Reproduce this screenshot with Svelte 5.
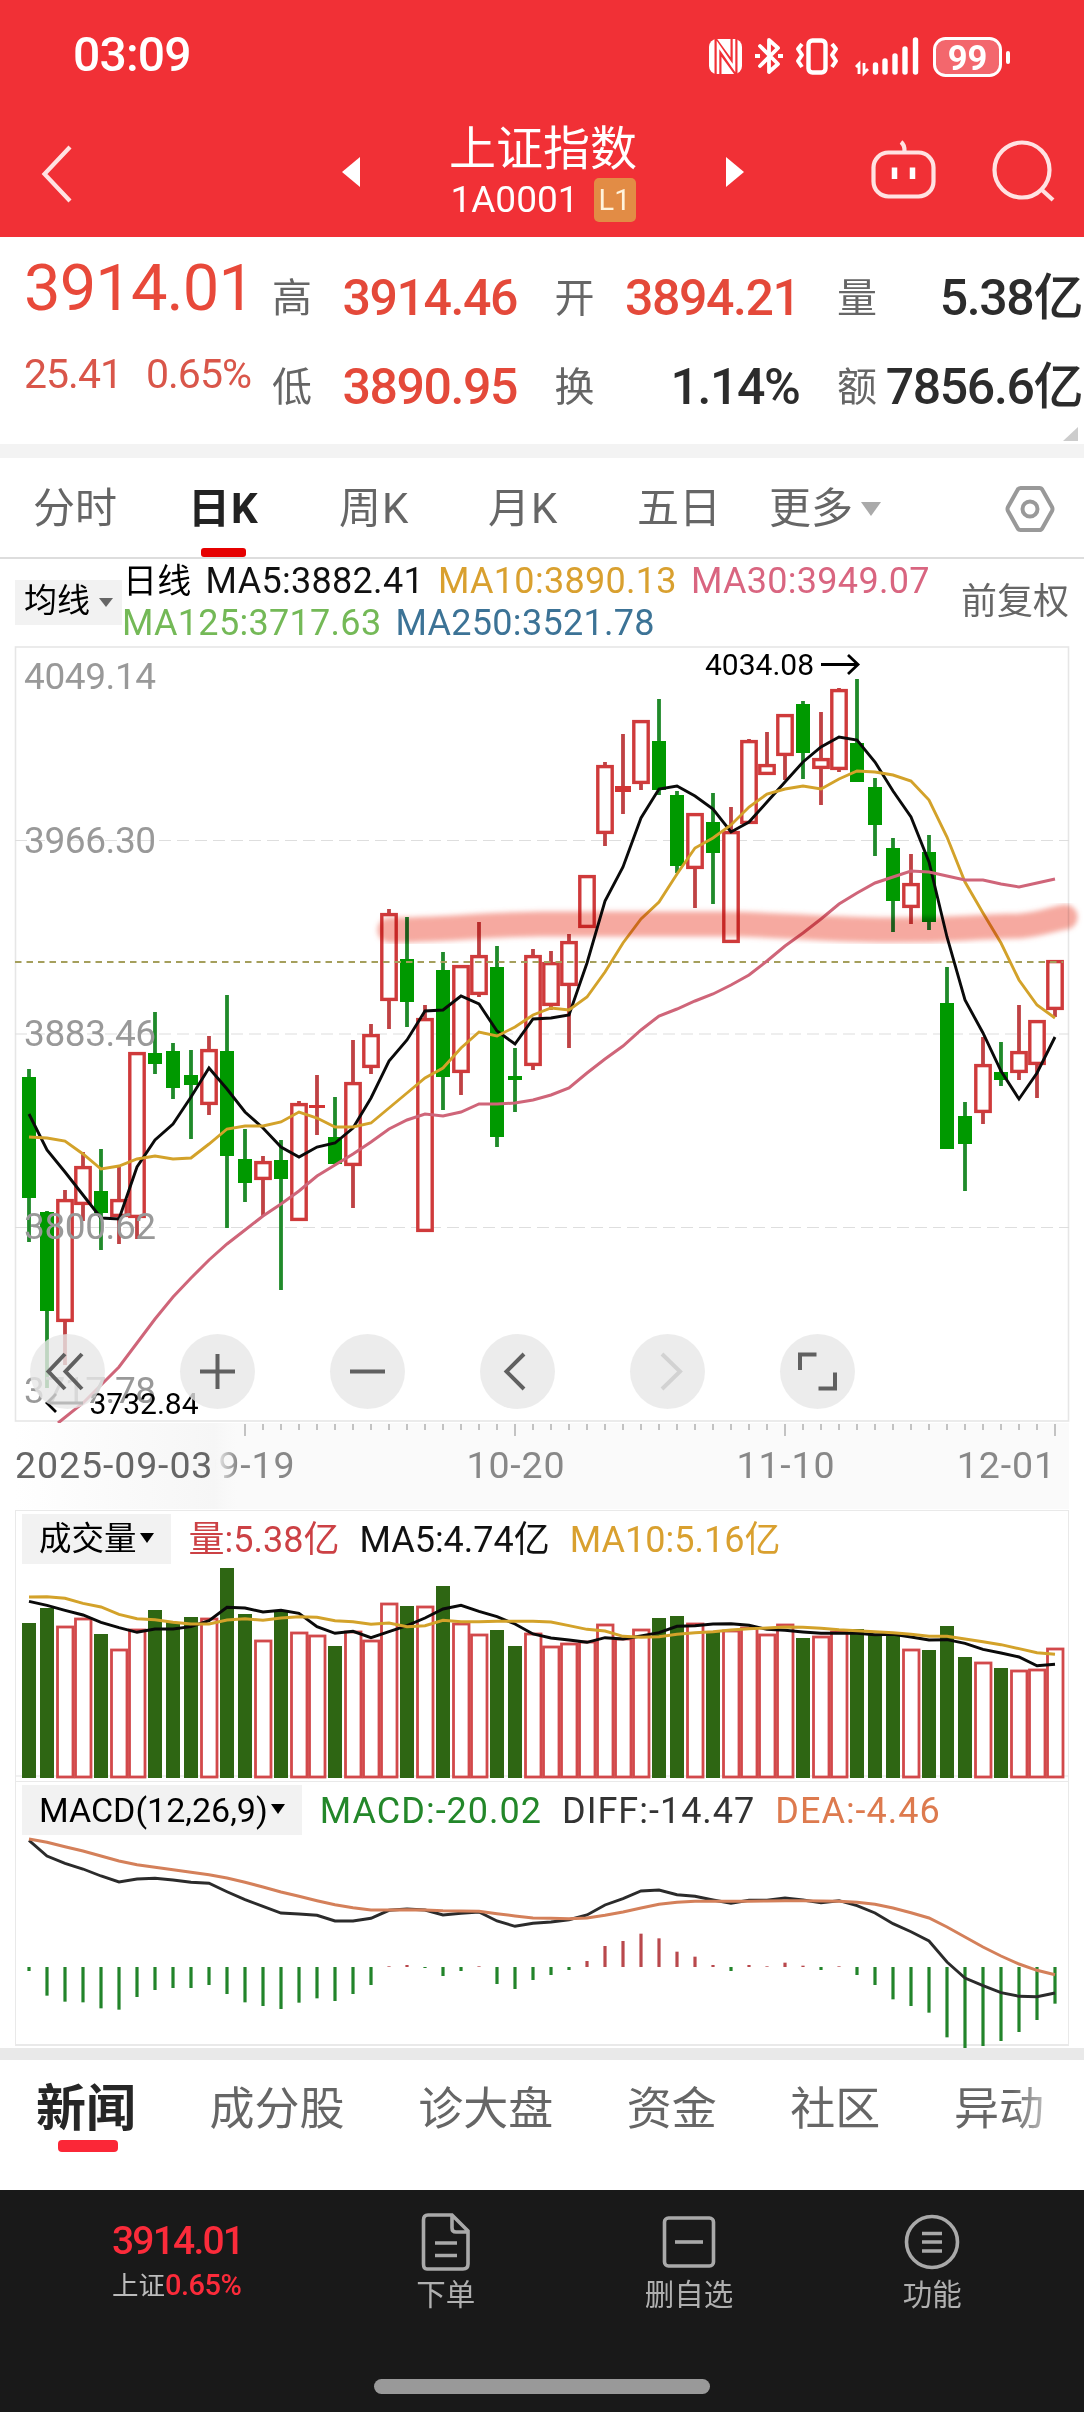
<script lang="ts">
  type Candle = [kind: string, high: number, top: number, bottom: number, low: number];

  const candles: Candle[] = [
    ["g", 1069, 1077, 1198, 1242], ["g", 1211, 1212, 1311, 1388], ["r", 1190, 1199, 1322, 1365],
    ["r", 1152, 1166, 1205, 1221], ["g", 1149, 1191, 1213, 1250], ["r", 1167, 1199, 1217, 1244],
    ["r", 1052, 1052, 1218, 1239], ["g", 1012, 1053, 1064, 1074], ["g", 1043, 1051, 1088, 1099],
    ["g", 1050, 1075, 1085, 1139], ["r", 1036, 1049, 1105, 1115], ["g", 995, 1051, 1156, 1228],
    ["g", 1129, 1159, 1183, 1202], ["r", 1156, 1161, 1180, 1216], ["g", 1140, 1160, 1179, 1290],
    ["r", 1101, 1103, 1221, 1221], ["r", 1075, 1105, 1108, 1135], ["g", 1097, 1137, 1164, 1164],
    ["r", 1040, 1082, 1166, 1208], ["r", 1024, 1034, 1068, 1074], ["r", 909, 913, 1001, 1029],
    ["g", 917, 959, 1002, 1027], ["r", 1005, 1018, 1232, 1232], ["g", 952, 970, 1077, 1110],
    ["r", 965, 965, 1073, 1095], ["r", 922, 955, 995, 997], ["g", 946, 967, 1137, 1147],
    ["g", 1048, 1076, 1080, 1112], ["r", 949, 955, 1066, 1070], ["r", 951, 962, 1006, 1010],
    ["r", 934, 941, 986, 1048], ["r", 875, 875, 928, 928], ["r", 762, 765, 834, 846],
    ["r", 734, 786, 792, 814], ["r", 720, 720, 784, 790], ["g", 699, 741, 790, 795],
    ["g", 791, 795, 866, 873], ["r", 813, 813, 869, 908], ["g", 793, 822, 853, 904],
    ["r", 807, 831, 943, 943], ["r", 739, 740, 824, 824], ["r", 732, 764, 775, 775],
    ["r", 714, 714, 756, 780], ["g", 701, 704, 753, 779], ["r", 712, 758, 769, 805],
    ["r", 688, 689, 770, 772], ["g", 679, 743, 782, 782], ["g", 778, 787, 825, 856],
    ["g", 838, 848, 901, 932], ["r", 854, 883, 908, 924], ["g", 835, 852, 922, 930],
    ["g", 967, 1003, 1149, 1149], ["g", 1102, 1116, 1144, 1191], ["r", 1037, 1064, 1113, 1124],
    ["g", 1042, 1072, 1080, 1086], ["r", 1005, 1051, 1073, 1080], ["r", 1020, 1020, 1065, 1098],
    ["r", 960, 960, 1010, 1017],
  ];

  const ma5 = [
    1114, 1150, 1172, 1195, 1218, 1219, 1167, 1140, 1124, 1097, 1068, 1089, 1112, 1128, 1147, 1157,
    1147, 1143, 1128, 1098, 1061, 1040, 1011, 1010, 996, 1004, 1031, 1044, 1019, 1018, 1015, 963,
    901, 867, 818, 789, 786, 796, 809, 832, 822, 802, 782, 762, 747, 737, 740, 762, 791, 817, 862,
    937, 1000, 1033, 1071, 1099, 1073, 1037,
  ];
  const ma10 = [
    1137, 1138, 1141, 1154, 1169, 1166, 1159, 1156, 1159, 1158, 1144, 1129, 1126, 1126, 1122, 1112,
    1118, 1127, 1127, 1123, 1108, 1093, 1078, 1068, 1048, 1032, 1036, 1027, 1015, 1008, 1010, 997,
    972, 943, 919, 902, 874, 848, 838, 825, 807, 794, 789, 786, 789, 779, 771, 772, 775, 781, 800,
    837, 882, 913, 943, 980, 1005, 1018,
  ];
  // starts two sessions in: earlier points fall below the panel
  const ma30 = [
    1403, 1385, 1367, 1343, 1319, 1297, 1278, 1260, 1244, 1230, 1216, 1204, 1191, 1176, 1165, 1154,
    1142, 1129, 1120, 1114, 1116, 1112, 1104, 1104, 1103, 1100, 1095, 1088, 1073, 1059, 1046, 1030,
    1016, 1009, 1001, 994, 985, 975, 961, 946, 933, 919, 904, 893, 883, 877, 871, 872, 876, 880,
    880, 884, 887, 883, 879,
  ];

  const volumes = [
    1623, 1608, 1626, 1618, 1634, 1649, 1629, 1610, 1622, 1617, 1618, 1568, 1614, 1640, 1612, 1632,
    1635, 1646, 1631, 1640, 1603, 1606, 1606, 1586, 1623, 1634, 1630, 1646, 1633, 1646, 1643, 1641,
    1624, 1638, 1629, 1618, 1616, 1623, 1632, 1630, 1627, 1634, 1624, 1638, 1636, 1631, 1629, 1635,
    1634, 1649, 1650, 1626, 1657, 1662, 1668, 1670, 1669, 1648,
  ];
  const volMa5 = [
    304, 316, 331, 345, 367, 383, 397, 387, 387, 380, 362, 322, 324, 336, 331, 340, 380, 400, 394,
    413, 395, 377, 354, 327, 316, 334, 350, 372, 402, 414, 420, 427, 413, 417, 408, 398, 379, 377,
    372, 371, 376, 388, 391, 396, 400, 400, 400, 404, 403, 411, 420, 419, 430, 448, 459, 471, 497,
    493,
  ].map((v) => 1500 + v / 3);
  const volMa10 = [
    291, 290, 295, 310, 321, 343, 356, 359, 367, 372, 372, 360, 356, 361, 354, 350, 352, 362, 365,
    373, 369, 380, 377, 361, 365, 365, 364, 364, 364, 366, 377, 388, 393, 409, 412, 410, 403, 398,
    395, 390, 386, 384, 381, 382, 385, 389, 392, 395, 398, 403, 409, 409, 417, 425, 434, 446, 458,
    463,
  ].map((v) => 1500 + v / 3);

  const diff = [
    178, 225, 247, 264, 285, 303, 294, 292, 297, 304, 307, 332, 356, 376, 396, 399, 403, 420, 420,
    412, 388, 384, 387, 402, 397, 393, 420, 436, 427, 423, 416, 402, 372, 353, 330, 327, 341, 346,
    357, 367, 358, 358, 351, 357, 365, 359, 374, 396, 428, 452, 480, 543, 591, 614, 635, 646, 647,
    636,
  ].map((v) => 1780 + v / 3);
  const dea = [
    174, 184, 197, 210, 225, 240, 251, 259, 266, 274, 281, 291, 304, 318, 333, 346, 359, 371, 380,
    387, 387, 386, 387, 389, 390, 391, 398, 405, 411, 412, 413, 411, 403, 393, 381, 370, 364, 361,
    361, 361, 361, 360, 359, 359, 360, 361, 364, 370, 381, 395, 411, 438, 468, 498, 525, 549, 568,
    581,
  ].map((v) => 1780 + v / 3);
  const macd = [
    570, 644, 662, 664, 682, 686, 648, 627, 621, 621, 612, 639, 664, 675, 684, 665, 652, 660, 639,
    612, 556, 552, 561, 585, 570, 556, 609, 624, 597, 582, 567, 540, 495, 480, 458, 472, 512, 527,
    552, 570, 552, 556, 545, 554, 567, 556, 582, 612, 655, 675, 695, 769, 804, 795, 780, 753, 717,
    668,
  ].map((v) => 1780 + v / 3);
  const zero = 1966;

  const x = (i: number) => 29 + i * 18;
  const line = (ys: number[], from = 0) =>
    ys.map((y, i) => `${x(i + from)},${y.toFixed(1)}`).join(" ");

  const gridLines = [840.5, 1034, 1227.5];
  const axisLabels: [string, number][] = [
    ["4049.14", 689], ["3966.30", 853], ["3883.46", 1046], ["3800.62", 1239], ["3717.78", 1403],
  ];
  const ticks = Array.from({ length: 46 }, (_, i) => i + 12);

  const quotes = [
    { label: "高", value: "3914.46", up: true },
    { label: "开", value: "3894.21", up: true },
    { label: "量", value: "5.38亿", up: false },
    { label: "低", value: "3890.95", up: true },
    { label: "换", value: "1.14%", up: false },
    { label: "额", value: "7856.6亿", up: false },
  ];
  const periods = ["分时", "日K", "周K", "月K", "五日"];
  const sections = ["新闻", "成分股", "诊大盘", "资金", "社区", "异动"];
</script>

<div class="screen">
  <header class="top">
    <div class="status">
      <span class="clock">03:09</span>
      <svg class="status-icons" viewBox="705 30 310 54" width="310" height="54">
        <rect x="709" y="39" width="33" height="35" rx="8" fill="#fff" />
        <path d="M718 74V46L734 68V39" fill="none" stroke="#f13036" stroke-width="7" />
        <path d="M718 74V45L734 68V39" fill="none" stroke="#fff" stroke-width="2.6" />
        <path d="M760 46L778 64L769 72V40L778 48L760 66" fill="none" stroke="#fff" stroke-width="3.8" stroke-linejoin="round" stroke-linecap="round" />
        <path d="M755 56h5M778 56h5" stroke="#fff" stroke-width="4" />
        <rect x="808.500" y="40.500" width="17" height="32" rx="4" fill="none" stroke="#fff" stroke-width="4.400" />
        <path d="M802 44l-4 5 4 6-4 6 4 6M832 44l4 5-4 6 4 6-4 6" fill="none" stroke="#fff" stroke-width="4" stroke-linejoin="round" />
        <path d="M859 74V64l-3 3M864 63v10l4-4" fill="none" stroke="#fff" stroke-width="2.800" />
        <path d="M875.500 65v7M885 61v11M895 56v16M905 49v23M915.500 40v32" stroke="#fff" stroke-width="5.400" stroke-linecap="round" />
        <rect x="934.500" y="38.500" width="66" height="37" rx="11" fill="#f3676d" stroke="#fff" stroke-width="3" />
        <path d="M1008 53v9" stroke="#fff" stroke-width="4" stroke-linecap="round" />
        <text x="967.500" y="69.500" text-anchor="middle" font-size="34.500" font-weight="700" fill="#fff">99</text>
      </svg>
    </div>
    <nav class="titlebar">
      <svg class="back" viewBox="0 0 30 58" width="30" height="58">
        <path d="M28 2L2.500 29L28 56" fill="none" stroke="#ffe2e2" stroke-width="4.200" />
      </svg>
      <div class="switcher">
        <span class="prev"></span>
        <div class="name">
          <h1>上证指数</h1>
          <div class="code">1A0001<span class="level">L1</span></div>
        </div>
        <span class="next"></span>
      </div>
      <div class="actions">
        <svg viewBox="870 137 67 62" width="67" height="62" fill="none" stroke="#ffe2e2" stroke-width="4.200">
          <rect x="873.500" y="150.500" width="60" height="44" rx="15" />
          <path d="M901 140q4 3 3.500 10" />
          <path d="M894.500 165.500v11.500M912.500 165.500v11.500" stroke="#fff" stroke-width="5.500" />
        </svg>
        <svg viewBox="992 139 63 63" width="63" height="63" fill="none" stroke="#ffe2e2" stroke-width="4.200">
          <circle cx="1022" cy="170" r="27.500" />
          <path d="M1042 190L1053 200" />
        </svg>
      </div>
    </nav>
  </header>

  <section class="quote">
    <div class="last">
      <strong>3914.01</strong>
      <div class="change"><span>25.41</span><span>0.65%</span></div>
    </div>
    <dl>
      {#each quotes as q}
        <div class="stat">
          <dt>{q.label}</dt>
          <dd class:up={q.up}>{q.value}</dd>
        </div>
      {/each}
    </dl>
    <span class="corner"></span>
  </section>

  <div class="periods">
    {#each periods as p}
      <span class="period" class:kline={p.endsWith("K")} class:on={p === "日K"}>{p}</span>
    {/each}
    <span class="period more">更多<i></i></span>
    <svg class="gear" viewBox="0 0 50 48" width="50" height="48" fill="none" stroke="#999" stroke-width="4">
      <path d="M15.500 3H34.500Q36.500 3 37.500 5L47 22Q48 24 47 26L37.500 43Q36.500 45 34.500 45H15.500Q13.500 45 12.500 43L3 26Q2 24 3 22L12.500 5Q13.500 3 15.500 3Z" />
      <circle cx="25" cy="24" r="7.500" />
    </svg>
  </div>

  <div class="averages">
    <span class="pick">均线<i></i></span>
    <div class="legend">
      <div><b>日线</b><span class="k">MA5:3882.41</span><span class="y">MA10:3890.13</span><span class="p">MA30:3949.07</span></div>
      <div><span class="g">MA125:3717.63</span><span class="b">MA250:3521.78</span></div>
    </div>
    <span class="adjust">前复权</span>
  </div>

  <div class="price">
    <svg viewBox="0 646 1084 864" width="1084" height="864">
      <defs>
        <linearGradient id="fade">
          <stop offset="0" stop-color="#fff" />
          <stop offset="0.900" stop-color="#f6f6f6" />
          <stop offset="1" stop-color="#f8f8f8" stop-opacity="0" />
        </linearGradient>
        <filter id="soft" x="-5%" y="-100%" width="110%" height="300%">
          <feGaussianBlur stdDeviation="2.500" />
        </filter>
      </defs>

      <rect x="15" y="1423" width="1054" height="86" fill="#fafafa" />
      <rect x="15.500" y="647" width="1053" height="774" fill="none" stroke="#e6e6e6" stroke-width="1.600" />
      {#each gridLines as y}
        <line x1="15" x2="1069" y1={y} y2={y} stroke="#dedede" stroke-width="1.200" stroke-dasharray="12 6" />
      {/each}

      {#each candles as [kind, high, top, bottom, low], i}
        {#if kind === "g"}
          <line x1={x(i)} x2={x(i)} y1={high} y2={low} stroke="#1f8a2a" stroke-width="3.800" />
          <rect x={x(i) - 7} y={top} width="14" height={bottom - top} fill="#009900" />
        {:else}
          <path d={`M${x(i)} ${high}V${top}M${x(i)} ${bottom}V${low}`} stroke="#bf4244" stroke-width="3.800" />
          {#if bottom - top < 7}
            <rect x={x(i) - 8} y={top} width="16" height={bottom - top} fill="#d23434" />
          {:else}
            <rect x={x(i) - 7.2} y={top + 1.6} width="14.400" height={bottom - top - 3.2} fill="#fff" stroke="#cf3a3b" stroke-width="3.400" />
          {/if}
        {/if}
      {/each}

      <line x1="15" x2="1063" y1="962" y2="962" stroke="#a59f5c" stroke-width="2" stroke-dasharray="6.500 5" />
      <polyline points={line(ma5)} fill="none" stroke="#0a0a0a" stroke-width="2.900" />
      <polyline points={line(ma10)} fill="none" stroke="#d3a22a" stroke-width="2.900" />
      <polyline points={"58,1423 " + line(ma30, 3)} fill="none" stroke="#cf6579" stroke-width="3" />

      <path class="marker" d="M390 930C440 930 480 925 540 924H730C790 925 810 929 880 930S960 927 1020 926C1042 924 1052 919 1065 917" filter="url(#soft)" />

      {#each axisLabels as [text, y]}
        <text x="24" {y} font-size="37" letter-spacing="-0.400" fill="#999">{text}</text>
      {/each}
      <text x="705" y="675" font-size="30">4034.08</text>
      <path d="M821 664.500H857M848 655L858 664.500L848 674" fill="none" stroke="#000" stroke-width="2.800" />
      <text x="89.500" y="1414" font-size="30">3732.84</text>
      <path d="M83 1403H48M56 1394L47 1403L56 1412" fill="none" stroke="#000" stroke-width="2.800" />

      {#each ticks as i}
        <line x1={x(i)} x2={x(i)} y1="1424" y2={i % 15 === 12 ? 1436 : 1430} stroke="#bdbdbd" stroke-width="1.800" />
      {/each}
      <g font-size="37.500" letter-spacing="0.900" fill="#888">
        <text x="246" y="1478" text-anchor="middle">09-19</text>
        <text x="516" y="1478" text-anchor="middle">10-20</text>
        <text x="786" y="1478" text-anchor="middle">11-10</text>
        <text x="1056" y="1478" text-anchor="end">12-01</text>
        <rect x="15" y="1423" width="222" height="86" fill="url(#fade)" />
        <text x="15" y="1478" fill="#666">2025-09-03</text>
      </g>
    </svg>

    <div class="tools">
      <button><svg viewBox="0 0 75 75"><path d="M35 20L18.500 37.500L35 55M52 20L35.500 37.500L52 55" /></svg></button>
      <button><svg viewBox="0 0 75 75"><path d="M20 37.500H55M37.500 20V55" /></svg></button>
      <button><svg viewBox="0 0 75 75"><path d="M20 37.500H55" /></svg></button>
      <button><svg viewBox="0 0 75 75"><path d="M44 20L26.500 37.500L44 55" /></svg></button>
      <button class="off"><svg viewBox="0 0 75 75"><path d="M32 20L50 37.500L32 55" /></svg></button>
      <button><svg viewBox="0 0 75 75"><path d="M20 36V20.500H36.500M38.500 54.500H55V38.500" /></svg></button>
    </div>
  </div>

  <section class="panel volume">
    <div class="head">
      <span class="pick">成交量<i></i></span>
      <span class="r">量:5.38亿</span><span class="k">MA5:4.74亿</span><span class="y">MA10:5.16亿</span>
    </div>
    <svg viewBox="16 1565 1052 216" width="1052" height="216">
      <line x1="16" x2="1068" y1="1776" y2="1776" stroke="#ececec" stroke-width="1.500" />
      {#each volumes as top, i}
        {#if candles[i][0] === "g"}
          <rect x={x(i) - 7} y={top} width="14" height={1778 - top} fill="#2e6613" />
        {:else}
          <rect x={x(i) - 7.5} y={top + 1} width="15.500" height={1776 - top} fill="#fff" stroke="#d2494b" stroke-width="2.800" />
        {/if}
      {/each}
      <polyline points={line(volMa5)} fill="none" stroke="#0a0a0a" stroke-width="2.900" />
      <polyline points={line(volMa10)} fill="none" stroke="#d3a22a" stroke-width="2.900" />
    </svg>
  </section>

  <section class="panel macd">
    <div class="head">
      <span class="pick">MACD(12,26,9)<i></i></span>
      <span class="dg">MACD:-20.02</span><span class="dk">DIFF:-14.47</span><span class="o">DEA:-4.46</span>
    </div>
    <svg viewBox="16 1835 1052 210" width="1052" height="210">
      {#each macd as y, i}
        <line x1={x(i)} x2={x(i)} y1={zero} y2={y} stroke={y < zero ? "#b9484c" : "#22842a"} stroke-width="3.200" />
      {/each}
      <polyline points={line(diff)} fill="none" stroke="#2b2b2b" stroke-width="2.900" />
      <polyline points={line(dea)} fill="none" stroke="#d4805a" stroke-width="3" />
    </svg>
  </section>

  <div class="sections">
    {#each sections as s, i}
      <span class:on={i === 0} class:cut={i === 5}>{s}</span>
    {/each}
  </div>

  <footer>
    <div class="dock">
      <div class="ticker">
        <strong>3914.01</strong>
        <span>上证<em>0.65%</em></span>
      </div>
      <div class="item">
        <svg viewBox="0 0 60 60" width="60" height="60">
          <path d="M12 3H36L52 19V52Q52 57 47 57H11Q7.500 57 7.500 52V8Q7.500 3 12 3ZM36 3V16Q36 20 40 20H52M19 31H41M19 43.500H41" />
        </svg>
        下单
      </div>
      <div class="item">
        <svg viewBox="0 0 60 60" width="60" height="60">
          <rect x="5.500" y="6" width="49" height="48" rx="4" />
          <path d="M16 30H44" />
        </svg>
        删自选
      </div>
      <div class="item">
        <svg viewBox="0 0 60 60" width="60" height="60">
          <circle cx="30" cy="30" r="25.500" />
          <path d="M20 21.500H40M20 30H40M20 39H40" />
        </svg>
        功能
      </div>
    </div>
    <div class="home"></div>
  </footer>
</div>

<style>
  :global(body) {
    margin: 0;
    background: #fff;
  }

  .screen {
    width: 1084px;
    height: 2412px;
    overflow: hidden;
    display: flex;
    flex-direction: column;
    background: #fff;
    color: #000;
    font-family: Roboto, "Noto Sans CJK SC", sans-serif;
  }
  .screen > * {
    flex-shrink: 0;
  }
  svg {
    display: block;
    overflow: visible;
    flex-shrink: 0;
  }

  .top {
    height: 237px;
    background: #f13036;
    color: #fff;
  }
  .status {
    height: 84px;
    display: flex;
    align-items: flex-end;
    justify-content: space-between;
    padding: 0 69px 0 73px;
  }
  .clock {
    font-size: 48px;
    line-height: 58px;
    font-weight: 500;
    letter-spacing: -0.8px;
  }
  .titlebar {
    height: 153px;
    padding: 28px 29px 0 31px;
    box-sizing: border-box;
    display: grid;
    grid-template-columns: 1fr 402px 1fr;
    align-items: start;
  }
  .back {
    margin: 33px 0 0 11px;
  }
  .switcher {
    display: flex;
    align-items: center;
    justify-content: space-between;
    margin-top: 9px;
  }
  .prev,
  .next {
    border: solid transparent;
    border-width: 15px 0;
  }
  .prev {
    border-right: 18px solid #fff;
  }
  .next {
    border-left: 18px solid #fff;
  }
  .name {
    text-align: center;
  }
  h1 {
    margin: 0;
    font-size: 47px;
    line-height: 56px;
    font-weight: 400;
  }
  .code {
    display: flex;
    justify-content: center;
    align-items: center;
    gap: 15px;
    font-size: 37px;
    line-height: 46px;
  }
  .level {
    width: 42px;
    height: 44px;
    line-height: 44px;
    border-radius: 5px;
    background: #e28c45;
    color: #fff3dc;
    font-size: 29px;
  }
  .actions {
    display: flex;
    justify-content: flex-end;
    gap: 55px;
    margin-top: 27px;
  }

  .quote {
    position: relative;
    height: 221px;
    box-sizing: border-box;
    border-bottom: 14px solid #f3f3f3;
    padding: 16px 2px 0 24px;
    display: flex;
  }
  .last {
    width: 248px;
    color: #e8493a;
  }
  .last strong {
    display: block;
    font-size: 65px;
    line-height: 70px;
    font-weight: 400;
    letter-spacing: -0.9px;
  }
  .change {
    display: flex;
    gap: 24px;
    margin-top: 26px;
    font-size: 41px;
    line-height: 50px;
    letter-spacing: -1px;
    color: #d9564a;
  }
  dl {
    margin: 1px 0 0;
    flex: 1;
    display: grid;
    grid-template-columns: repeat(3, 245px);
    grid-auto-rows: 89px;
    justify-content: space-between;
    line-height: 89px;
  }
  .stat {
    display: flex;
    justify-content: space-between;
    white-space: nowrap;
  }
  dt {
    font-size: 40px;
    color: #666;
  }
  dd {
    margin: 0;
    font-size: 50px;
    font-weight: 500;
    letter-spacing: -1.4px;
    color: #2c2c2c;
  }
  dd.up {
    color: #e4493a;
  }
  .corner {
    position: absolute;
    right: 6px;
    bottom: 3px;
    border-left: 15px solid transparent;
    border-bottom: 14px solid #ccc;
  }

  .periods {
    height: 101px;
    box-sizing: border-box;
    border-bottom: 2px solid #ddd;
    padding: 2px 29px 0 33px;
    display: flex;
    align-items: center;
    gap: 73px;
    font-size: 42px;
    line-height: 97px;
    color: #666;
  }
  .period {
    position: relative;
    white-space: nowrap;
  }
  .period.kline {
    width: 76px;
    letter-spacing: 1px;
  }
  .period.on {
    color: #222;
    font-weight: 700;
    margin: 0 2px 0 -2px;
  }
  .period.on::after {
    content: "";
    position: absolute;
    left: 13px;
    bottom: 0;
    width: 45px;
    height: 9px;
    border-radius: 3px;
    background: #e60000;
  }
  .more {
    display: flex;
    align-items: center;
    gap: 8px;
    margin-left: -25px;
  }
  .more i {
    border: 10px solid transparent;
    border-top: 14px solid #aaa;
    border-bottom: 0;
  }
  .gear {
    margin-left: auto;
  }

  .averages {
    height: 87px;
    padding: 0 15px;
    display: flex;
    align-items: flex-start;
  }
  .pick {
    display: flex;
    align-items: center;
    background: #f2f2f2;
    font-size: 32px;
  }
  .pick i {
    border: 7px solid transparent;
    border-top: 9px solid #666;
    border-bottom: 0;
  }
  .averages .pick {
    width: 98px;
    height: 45px;
    line-height: 41px;
    margin-top: 21px;
    padding-left: 9px;
    gap: 9px;
    align-items: normal;
    font-size: 33px;
  }
  .averages .pick i {
    height: 0;
    margin-top: 18px;
  }
  .legend {
    padding-top: 1px;
    font-size: 36px;
    line-height: 42px;
    letter-spacing: 0.3px;
    white-space: nowrap;
  }
  .legend div {
    display: flex;
    gap: 14px;
  }
  .legend b {
    font-size: 34px;
    font-weight: 400;
    margin-left: 1px;
  }
  .adjust {
    margin: 21px 0 0 auto;
    font-size: 36px;
    line-height: 45px;
    color: #666;
  }
  .k {
    color: #111;
  }
  .dk {
    color: #333;
  }
  .y {
    color: #d9a02f;
  }
  .p {
    color: #d96580;
  }
  .g {
    color: #74b957;
  }
  .b {
    color: #3c7396;
  }
  .r {
    color: #cc4145;
  }
  .dg {
    color: #23872a;
  }
  .o {
    color: #dd7a4e;
  }

  .price {
    position: relative;
    height: 864px;
  }
  .marker {
    fill: none;
    stroke: #f0705f;
    stroke-opacity: 0.6;
    stroke-width: 25;
    stroke-linecap: round;
    mix-blend-mode: multiply;
  }
  .tools {
    position: absolute;
    left: 30px;
    top: 688px;
    display: flex;
    gap: 75px;
  }
  button {
    width: 75px;
    height: 75px;
    padding: 0;
    border: 0;
    border-radius: 50%;
    background: rgba(231, 231, 231, 0.8);
  }
  button path {
    fill: none;
    stroke: #606060;
    stroke-width: 4;
  }
  .off path {
    stroke: #d2d2d2;
  }

  .panel {
    box-sizing: border-box;
    margin: 0 15px;
    border: solid #e9e9e9;
    border-width: 1px 1px 0;
  }
  .volume {
    height: 271px;
  }
  .macd {
    height: 265px;
    border-bottom-width: 2px;
  }
  .head {
    height: 54px;
    padding: 3px 0 0 6px;
    box-sizing: border-box;
    display: flex;
    line-height: 53px;
    font-size: 36px;
    white-space: nowrap;
  }
  .head .pick {
    height: 50px;
    padding: 0 17px;
    gap: 3px;
    margin-right: 18px;
    font-size: 32.5px;
  }
  .head .pick i {
    border-width: 10px 7.5px 0;
    border-top-color: #000;
    margin-bottom: 3px;
  }
  .head > span + span {
    margin-right: 20px;
  }
  .macd .head {
    letter-spacing: 1px;
  }
  .macd .pick {
    font-size: 34px;
    letter-spacing: 0;
  }

  .sections {
    height: 142px;
    box-sizing: border-box;
    border-top: 12px solid #e9e9e9;
    margin-top: 2px;
    padding: 1px 40px 0 36px;
    display: flex;
    justify-content: space-between;
    font-size: 45px;
    line-height: 97px;
    color: #666;
  }
  .sections span {
    position: relative;
  }
  .sections .on {
    font-size: 50px;
    font-weight: 700;
    color: #262626;
  }
  .sections .on::after {
    content: "";
    position: absolute;
    left: 22px;
    top: 79px;
    width: 60px;
    height: 12px;
    border-radius: 4px;
    background: #fb2737;
  }
  .sections .cut {
    background: linear-gradient(90deg, #666 65%, #bbb);
    background-clip: text;
    -webkit-background-clip: text;
    color: transparent;
  }

  footer {
    flex: 1 0 0;
    background: #191919;
  }
  .dock {
    height: 189px;
    padding-right: 30px;
    display: grid;
    grid-template-columns: 324px repeat(3, 1fr);
  }
  .ticker {
    padding: 26px 0 0 112px;
    color: #fb2b3a;
  }
  .ticker strong {
    display: block;
    font-size: 39px;
    line-height: 50px;
    font-weight: 500;
    letter-spacing: -1.8px;
  }
  .ticker span {
    display: block;
    font-size: 26.5px;
    line-height: 39px;
    color: #bbb;
  }
  .ticker em {
    font-style: normal;
    font-size: 29px;
    font-weight: 500;
    color: #fb2b3a;
    letter-spacing: -0.5px;
  }
  .item {
    display: flex;
    flex-direction: column;
    align-items: center;
    padding-top: 22px;
    font-size: 29.5px;
    line-height: 47px;
    color: #b0b0b0;
  }
  .item svg {
    fill: none;
    stroke: #a9a9a9;
    stroke-width: 3.6;
  }
  .home {
    width: 336px;
    height: 15px;
    margin: 0 auto;
    border-radius: 8px;
    background: #999;
  }
</style>
